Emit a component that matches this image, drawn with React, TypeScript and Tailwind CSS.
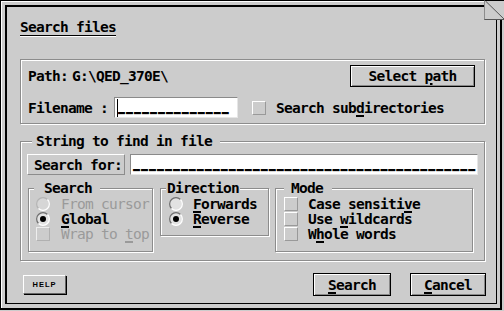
import React from "react";

const F =
  "font-['DejaVu_Sans_Mono',monospace] text-[14.5px] tracking-[-0.73px] font-bold leading-[16px] text-black whitespace-pre";
const FD =
  "font-['DejaVu_Sans_Mono',monospace] text-[14.5px] tracking-[-0.73px] font-normal leading-[16px] text-[#9a9a9a] whitespace-pre";
const FU =
  "font-['DejaVu_Sans_Mono',monospace] text-[11.6px] tracking-[1px] font-bold leading-[12px] text-black whitespace-pre [text-shadow:0_1px_0_#000]";

function U({ children }: { children: React.ReactNode }) {
  return <span className="underline decoration-[1.5px] underline-offset-[2px]">{children}</span>;
}

function Radio({ on, disabled }: { on?: boolean; disabled?: boolean }) {
  return (
    <svg width="14" height="14" viewBox="0 0 14 14" className="shrink-0">
      <circle cx="7" cy="7" r="6.3" fill={disabled ? "#d6d6d6" : "#e2e2e2"} />
      <path d="M2.5 11.5 A6.3 6.3 0 0 1 11.5 2.5" stroke={disabled ? "#b4b4b4" : "#6e6e6e"} strokeWidth="1.2" fill="none" />
      <path d="M11.5 2.5 A6.3 6.3 0 0 1 2.5 11.5" stroke="#ffffff" strokeWidth="1.2" fill="none" />
      {on && <circle cx="7" cy="7" r="3" fill="#000" />}
    </svg>
  );
}

function Check({ disabled }: { disabled?: boolean }) {
  return (
    <div
      className={
        disabled
          ? "w-[14px] h-[14px] shrink-0 border border-t-[#eeeeee] border-l-[#eeeeee] border-r-[#b0b0b0] border-b-[#b0b0b0] bg-[#cccccc]"
          : "w-[14px] h-[14px] shrink-0 border border-t-white border-l-white border-r-[#999999] border-b-[#999999] bg-[#cccccc]"
      }
    />
  );
}

function Btn({ children, className }: { children: React.ReactNode; className: string }) {
  return (
    <div
      className={
        "flex items-center justify-center border border-black bg-[#cccccc] shadow-[inset_1px_1px_0_#ffffff,inset_-1px_-1px_0_#888888] " +
        className
      }
    >
      <span className={F}>{children}</span>
    </div>
  );
}

export default function App() {
  return (
    <div className="w-[504px] h-[311px] bg-[#cccccc] relative overflow-hidden">
      <div className="w-[502px] h-[310px] border-l border-t border-r-2 border-b-2 border-black shadow-[inset_1px_1px_0_#ffffff] pt-[4px] pl-[4px]">
        <div className="w-[492px] h-[299px] border-l-2 border-t-2 border-r border-b border-black pl-[13px] pt-[12px] flex flex-col items-start">
          {/* Title */}
          <div className={F + " leading-[15px] border-b border-black shadow-[0_1px_0_#ffffff]"}>Search files</div>

          {/* Path group */}
          <div className="mt-[23px] w-[465px] h-[65px] border border-[#8c8c8c] shadow-[inset_1px_1px_0_#ffffff,1px_1px_0_#ffffff] flex flex-col">
            <div className="mt-[5px] h-[22px] flex items-center pl-[7px] pr-[9px]">
              <span className={F}>Path:</span>
              <span className={F + " ml-[4px]"}>G:\QED_370E\</span>
              <Btn className="ml-auto w-[125px] h-[22px]">
                Select <U>p</U>ath
              </Btn>
            </div>
            <div className="mt-[10px] h-[21px] flex items-center pl-[7px]">
              <span className={F}>Filename :</span>
              <div className="ml-[6px] w-[124px] h-[21px] bg-white border border-t-[#8a8a8a] border-l-[#8a8a8a] border-r-[#e6e6e6] border-b-[#e6e6e6] flex items-start pl-[2px] pt-[1px]">
                <span className="w-[1px] h-[18px] bg-black shrink-0" />
                <span className={FU + " mt-[1px]"}>______________</span>
              </div>
              <div className="ml-[14px]">
                <Check />
              </div>
              <span className={F + " ml-[10px]"}>
                Search sub<U>d</U>irectories
              </span>
            </div>
          </div>

          {/* String group */}
          <div className="relative mt-[17px] w-[465px] h-[120px] border border-[#8c8c8c] shadow-[inset_1px_1px_0_#ffffff,1px_1px_0_#ffffff] flex flex-col">
            <div className={F + " absolute top-[-9px] left-[11px] pl-[4px] pr-[8px] bg-[#cccccc]"}>String to find in file</div>
            <div className="mt-[12px] pl-[6px] flex items-center">
              <div className="w-[98px] h-[21px] border border-t-white border-l-white border-r-[#8c8c8c] border-b-[#8c8c8c] bg-[#cccccc] flex items-center pl-[6px]">
                <span className={F}>Search for:</span>
              </div>
              <div className="ml-[5px] w-[348px] h-[21px] bg-white border border-t-[#8a8a8a] border-l-[#8a8a8a] border-r-[#e6e6e6] border-b-[#e6e6e6] flex items-start pl-[2px] pt-[2px]">
                <span className={FU}>___________________________________________</span>
              </div>
            </div>

            <div className="mt-[13px] pl-[7px] flex items-start">
              {/* Search */}
              <div className="relative w-[125px] h-[64px] border border-[#8c8c8c] shadow-[inset_1px_1px_0_#ffffff,1px_1px_0_#ffffff] pt-[7px] pl-[7px]">
                <div className={F + " absolute top-[-9px] left-[5px] pl-[10px] pr-[8px] bg-[#cccccc]"}>Search</div>
                <div className="h-[15px] flex items-center">
                  <Radio disabled />
                  <span className={FD + " ml-[11px]"}>From cursor</span>
                </div>
                <div className="h-[15px] flex items-center">
                  <Radio on />
                  <span className={F + " ml-[11px]"}>
                    <U>G</U>lobal
                  </span>
                </div>
                <div className="h-[15px] flex items-center">
                  <Check disabled />
                  <span className={FD + " ml-[11px]"}>
                    Wrap to <U>t</U>op
                  </span>
                </div>
              </div>

              {/* Direction */}
              <div className="relative ml-[7px] w-[109px] h-[48px] border border-[#8c8c8c] shadow-[inset_1px_1px_0_#ffffff,1px_1px_0_#ffffff] pt-[7px] pl-[8px]">
                <div className={F + " absolute top-[-9px] left-[5px] pl-[1px] pr-[1px] bg-[#cccccc]"}>Direction</div>
                <div className="h-[15px] flex items-center">
                  <Radio />
                  <span className={F + " ml-[10px]"}>
                    <U>F</U>orwards
                  </span>
                </div>
                <div className="h-[15px] flex items-center">
                  <Radio on />
                  <span className={F + " ml-[10px]"}>
                    <U>R</U>everse
                  </span>
                </div>
              </div>

              {/* Mode */}
              <div className="relative ml-[6px] w-[198px] h-[64px] border border-[#8c8c8c] shadow-[inset_1px_1px_0_#ffffff,1px_1px_0_#ffffff] pt-[7px] pl-[8px]">
                <div className={F + " absolute top-[-9px] left-[8px] pl-[7px] pr-[9px] bg-[#cccccc]"}>Mode</div>
                <div className="h-[15px] flex items-center">
                  <Check />
                  <span className={F + " ml-[10px]"}>
                    Case sensiti<U>v</U>e
                  </span>
                </div>
                <div className="h-[15px] flex items-center">
                  <Check />
                  <span className={F + " ml-[10px]"}>
                    Use <U>w</U>ildcards
                  </span>
                </div>
                <div className="h-[15px] flex items-center">
                  <Check />
                  <span className={F + " ml-[10px]"}>
                    W<U>h</U>ole words
                  </span>
                </div>
              </div>
            </div>
          </div>

          {/* Bottom buttons */}
          <div className="mt-[12px] flex items-center">
            <div className="ml-[3px] w-[43px] h-[19px] border-t border-l border-white border-r border-b border-r-[#666666] border-b-[#666666] shadow-[1px_1px_0_#000000] bg-[#cccccc] flex items-center justify-center">
              <span className="font-['Liberation_Sans',sans-serif] text-[7.5px] font-bold tracking-[1px] leading-none text-black">HELP</span>
            </div>
            <Btn className="ml-[247px] w-[78px] h-[23px]">
              <U>S</U>earch
            </Btn>
            <Btn className="ml-[19px] w-[76px] h-[23px]">
              <U>C</U>ancel
            </Btn>
          </div>
        </div>
      </div>

      {/* corner box */}
      <div className="absolute left-[484px] top-0 w-[20px] h-[20px] bg-[#cccccc] border-t border-black border-l border-l-[#8c8c8c] border-b border-b-[#555555]">
        <svg width="19" height="18" viewBox="0 0 19 18" className="block">
          <line x1="0.5" y1="0" x2="19" y2="18" stroke="#555555" strokeWidth="1" />
        </svg>
      </div>
    </div>
  );
}
